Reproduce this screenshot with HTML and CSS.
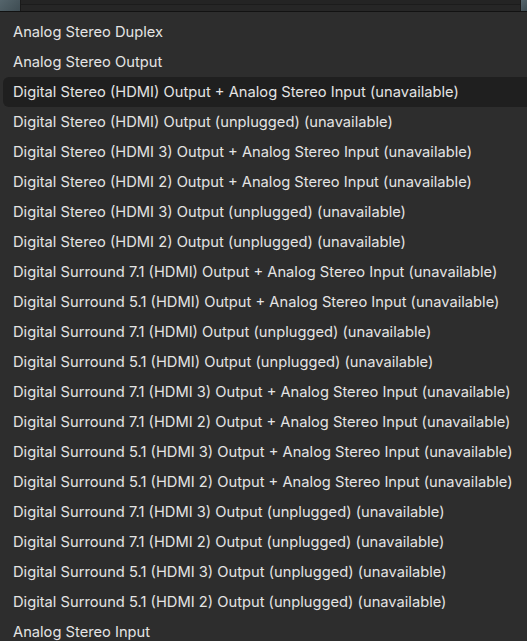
FILE: index.html
```html
<!DOCTYPE html>
<html lang="en">
<head>
    <meta charset="UTF-8">
    <meta name="viewport" content="width=device-width, initial-scale=1.0">
    <title>Audio Profiles</title>
    <link rel="stylesheet" href="styles.css">
</head>
<body>
    <div class="topstrip">
        <div class="wall"></div>
        <div class="panel"><div class="panel-line"></div></div>
        <div class="wall wall-right"></div>
    </div>
    <ul class="menu">
        <li class="item">Analog Stereo Duplex</li>
        <li class="item">Analog Stereo Output</li>
        <li class="item hover">Digital Stereo (HDMI) Output + Analog Stereo Input (unavailable)</li>
        <li class="item">Digital Stereo (HDMI) Output (unplugged) (unavailable)</li>
        <li class="item">Digital Stereo (HDMI 3) Output + Analog Stereo Input (unavailable)</li>
        <li class="item">Digital Stereo (HDMI 2) Output + Analog Stereo Input (unavailable)</li>
        <li class="item">Digital Stereo (HDMI 3) Output (unplugged) (unavailable)</li>
        <li class="item">Digital Stereo (HDMI 2) Output (unplugged) (unavailable)</li>
        <li class="item">Digital Surround 7.1 (HDMI) Output + Analog Stereo Input (unavailable)</li>
        <li class="item">Digital Surround 5.1 (HDMI) Output + Analog Stereo Input (unavailable)</li>
        <li class="item">Digital Surround 7.1 (HDMI) Output (unplugged) (unavailable)</li>
        <li class="item">Digital Surround 5.1 (HDMI) Output (unplugged) (unavailable)</li>
        <li class="item">Digital Surround 7.1 (HDMI 3) Output + Analog Stereo Input (unavailable)</li>
        <li class="item">Digital Surround 7.1 (HDMI 2) Output + Analog Stereo Input (unavailable)</li>
        <li class="item">Digital Surround 5.1 (HDMI 3) Output + Analog Stereo Input (unavailable)</li>
        <li class="item">Digital Surround 5.1 (HDMI 2) Output + Analog Stereo Input (unavailable)</li>
        <li class="item">Digital Surround 7.1 (HDMI 3) Output (unplugged) (unavailable)</li>
        <li class="item">Digital Surround 7.1 (HDMI 2) Output (unplugged) (unavailable)</li>
        <li class="item">Digital Surround 5.1 (HDMI 3) Output (unplugged) (unavailable)</li>
        <li class="item">Digital Surround 5.1 (HDMI 2) Output (unplugged) (unavailable)</li>
        <li class="item">Analog Stereo Input</li>
    </ul>
</body>
</html>
```

FILE: styles.css
```css
html, body {
    margin: 0;
    padding: 0;
    height: 100%;
    overflow: hidden;
}
body {
    font-family: Inter, "Noto Sans", sans-serif;
    font-size: 14.7px;
    background-color: #2d2d2d;
    color: #e4e4e4;
}
.topstrip {
    display: flex;
    height: 11px;
    border-bottom: 1px solid #121212;
}
.wall {
    width: 20px;
    background: linear-gradient(135deg, #55656c, #3e4c52);
}
.wall-right {
    width: 6px;
}
.panel {
    flex: 1;
    background-color: #262626;
    border-left: 1px solid #1a1a1a;
    border-right: 1px solid #1a1a1a;
}
.panel-line {
    height: 4px;
    border-bottom: 1px solid #1c1c1c;
    background-color: #242424;
}
.menu {
    list-style: none;
    margin: 0;
    padding: 5px 0 0 3px;
}
.item {
    height: 30px;
    line-height: 30px;
    padding-left: 10px;
    white-space: nowrap;
    border-radius: 6px 0 0 6px;
}
.item.hover {
    background-color: #1f1f1f;
}
```
